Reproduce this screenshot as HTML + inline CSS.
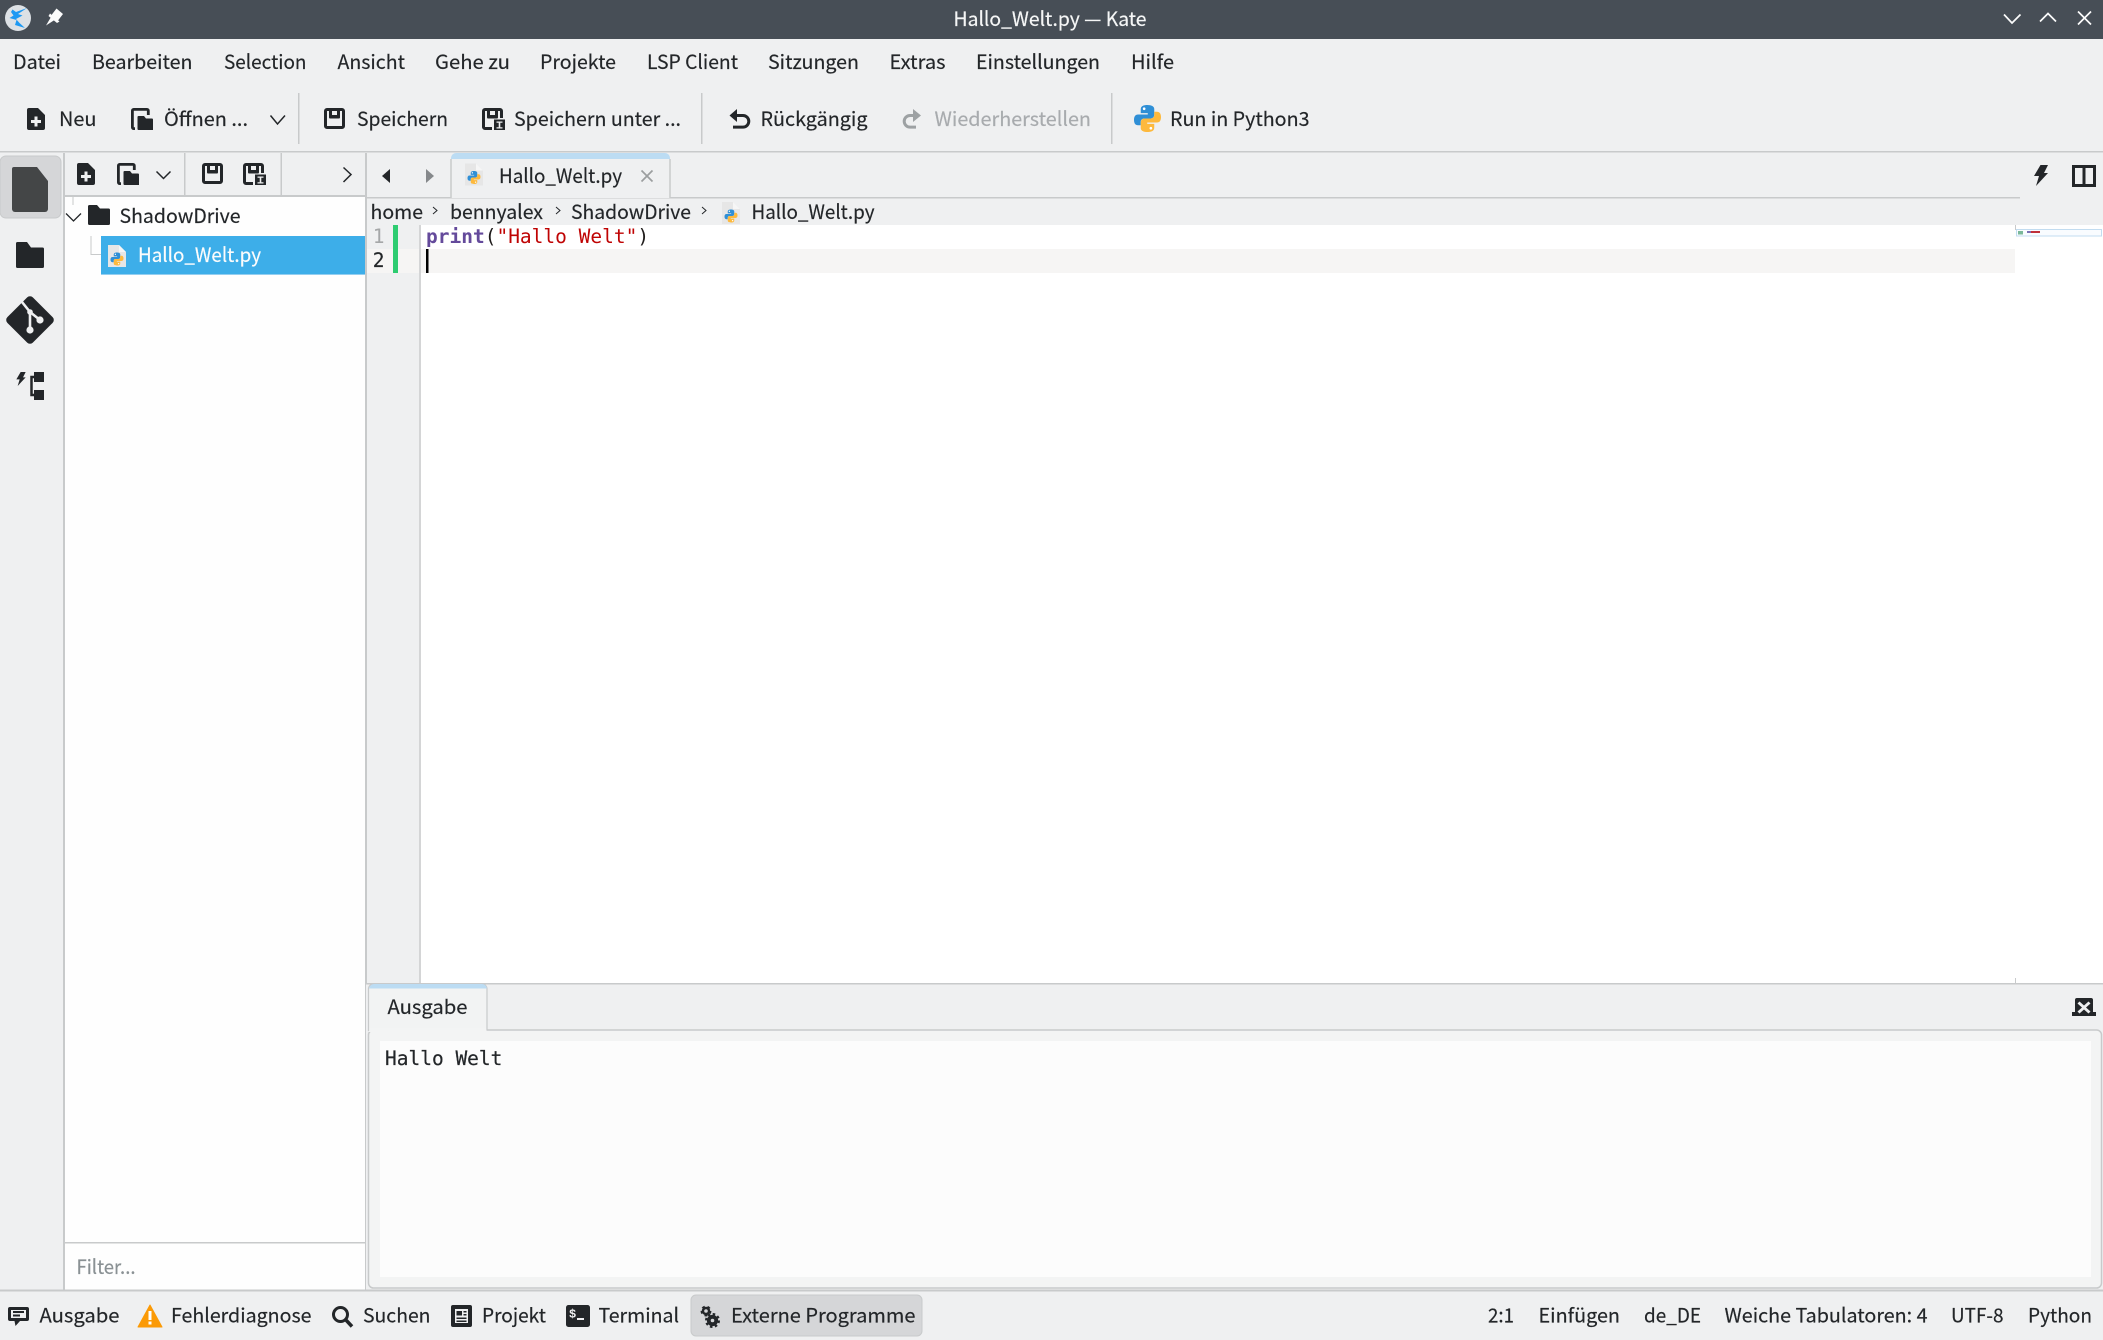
<!DOCTYPE html>
<html><head><meta charset="utf-8"><title>Hallo_Welt.py — Kate</title>
<style>
html,body{margin:0;padding:0;background:#eff0f1;width:2103px;height:1340px;overflow:hidden}
svg{display:block}
text{font-family:"Noto Sans CJK SC","Liberation Sans",sans-serif;font-size:19.6px;fill:#232629;stroke:#232629;stroke-width:.18px}
.m{font-family:"DejaVu Sans Mono","Liberation Mono",monospace;font-size:19.5px;stroke:none}
</style></head><body>
<svg xmlns="http://www.w3.org/2000/svg" width="2103" height="1340" viewBox="0 0 2103 1340">
<defs>
<symbol id="py" viewBox="2 2 20 20">
<path fill="#2f8fd6" d="M12 2C7.5 2 7 3.8 7 5.5V8h5.2v1H5C3 9 2 10.5 2 13s1 4 3 4h2v-2.5C7 12.8 8.3 12 10 12h4c1.7 0 3-1 3-3V5c0-2-2-3-5-3Z"/>
<path fill="#fdb93d" d="M12 22c4.5 0 5-1.8 5-3.500V16h-5.200v-1H19c2 0 3-1.500 3-4s-1-4-3-4h-2v2.500C17 11.200 15.700 12 14 12h-4c-1.700 0-3 1-3 3v4c0 2 2 3 5 3Z"/>
<circle cx="9.500" cy="4.800" r="1" fill="#fff"/><circle cx="14.500" cy="19.200" r="1" fill="#fff"/>
</symbol>
<symbol id="pyf" viewBox="0 0 18 22">
<path fill="#e6e6e6" d="M0 0H11L18 7V22H0Z"/><path fill="#f6f6f6" d="M11 0L18 7H11Z"/>
<use href="#py" x="2.500" y="7.500" width="13" height="13"/>
</symbol>
<symbol id="new" viewBox="0 0 18 22">
<path fill="#232629" fill-rule="evenodd" d="M2 0H11L18 7V20a2 2 0 0 1-2 2H2a2 2 0 0 1-2-2V2a2 2 0 0 1 2-2ZM7.500 8.500v3.500H4v3h3.500v3.500h3V15H14v-3h-3.500V8.500Z"/>
</symbol>
<symbol id="open" viewBox="0 0 22 22">
<path fill="none" stroke="#232629" stroke-width="2.800" d="M4 20.600H2.700a1.300 1.300 0 0 1-1.300-1.300V2.700A1.300 1.300 0 0 1 2.700 1.400H16a1.300 1.300 0 0 1 1.300 1.300V7"/>
<path fill="#232629" d="M6.500 9a1 1 0 0 1 1-1H13l2 2.500H21a1 1 0 0 1 1 1V22H7.500a1 1 0 0 1-1-1Z"/>
</symbol>
<symbol id="save" viewBox="0 0 21 21">
<path fill="none" stroke="#232629" stroke-width="3" d="M3 1.500H18a1.500 1.500 0 0 1 1.500 1.500V18a1.500 1.500 0 0 1-1.500 1.500H3A1.500 1.500 0 0 1 1.500 18V3A1.500 1.500 0 0 1 3 1.500Z"/>
<path fill="#232629" d="M5 1h3v6h5V1h3v8.500a1 1 0 0 1-1 1H6a1 1 0 0 1-1-1Z"/>
</symbol>
<symbol id="saveas" viewBox="0 0 23 22">
<path fill="none" stroke="#232629" stroke-width="3" d="M10 20.500H3A1.500 1.500 0 0 1 1.500 19V3A1.500 1.500 0 0 1 3 1.500H18A1.500 1.500 0 0 1 19.500 3V10"/>
<path fill="#232629" d="M5 1h3v6h5V1h3v8.500a1 1 0 0 1-1 1H6a1 1 0 0 1-1-1Z"/>
<path fill="#232629" fill-rule="evenodd" d="M12 11.500H23V22H12ZM14.500 13.500v1.300h2.200v4.400h-2.200v1.300h6v-1.300h-2.200v-4.400h2.200v-1.300Z"/>
</symbol>
<symbol id="bolt" viewBox="0 0 14 21">
<path fill="#232629" d="M6.500 0H14L10 8H14L2 21L5 11H0Z"/>
</symbol>
</defs>

<!-- base -->
<rect width="2103" height="1340" fill="#eff0f1"/>

<!-- title bar -->
<rect width="2103" height="39" fill="#474e56"/>
<circle cx="18" cy="18" r="13" fill="#dde1e5"/>
<path d="M27 8L16 12L12.500 9.500L11 12L13.500 15.500L9.500 18L16.500 20L15 25L25 28L19.500 23L16 19L22.500 15.500L18 14Z" fill="#1d99f3"/>
<path d="M56.500 8.500L63 14L58 20.500L51.500 15Z M50 13.500L59.500 21.500L57 23L48.500 16Z M51 17L54.500 20L46 25.500Z" fill="#fcfcfc"/>
<text x="953.500" y="26" textLength="193" lengthAdjust="spacingAndGlyphs" style="fill:#f5f6f6;stroke:#f5f6f6">Hallo_Welt.py — Kate</text>
<g fill="none" stroke="#fcfcfc" stroke-width="1.700">
<path d="M2004 14.500L2012 23L2020.500 14.500"/>
<path d="M2040 21.500L2048 13.500L2056 21.500"/>
<path d="M2078 11.500L2091 24.500M2091 11.500L2078 24.500"/>
</g>

<!-- menu -->
<g>
<text x="13" y="69" textLength="48" lengthAdjust="spacingAndGlyphs">Datei</text>
<text x="92" y="69" textLength="100.500" lengthAdjust="spacingAndGlyphs">Bearbeiten</text>
<text x="224" y="69" textLength="82.500" lengthAdjust="spacingAndGlyphs">Selection</text>
<text x="337.500" y="69" textLength="67.500" lengthAdjust="spacingAndGlyphs">Ansicht</text>
<text x="435" y="69" textLength="75" lengthAdjust="spacingAndGlyphs">Gehe zu</text>
<text x="540" y="69" textLength="76" lengthAdjust="spacingAndGlyphs">Projekte</text>
<text x="647" y="69" textLength="91" lengthAdjust="spacingAndGlyphs">LSP Client</text>
<text x="768" y="69" textLength="91" lengthAdjust="spacingAndGlyphs">Sitzungen</text>
<text x="889.500" y="69" textLength="56" lengthAdjust="spacingAndGlyphs">Extras</text>
<text x="976" y="69" textLength="124" lengthAdjust="spacingAndGlyphs">Einstellungen</text>
<text x="1131" y="69" textLength="43" lengthAdjust="spacingAndGlyphs">Hilfe</text>
</g>

<!-- toolbar -->
<use href="#new" x="27" y="108" width="18" height="22"/>
<text x="59" y="126" textLength="37.500" lengthAdjust="spacingAndGlyphs">Neu</text>
<use href="#open" x="131" y="108" width="22" height="22"/>
<text x="164" y="126" textLength="84" lengthAdjust="spacingAndGlyphs">Öffnen ...</text>
<path d="M270.500 115.500L277.500 124L285 115.500" fill="none" stroke="#232629" stroke-width="1.500"/>
<rect x="298" y="93" width="1.500" height="51" fill="#c8cacb"/>
<use href="#save" x="324" y="108" width="21" height="21"/>
<text x="357" y="126" textLength="91" lengthAdjust="spacingAndGlyphs">Speichern</text>
<use href="#saveas" x="482" y="108" width="23" height="22"/>
<text x="514" y="126" textLength="167" lengthAdjust="spacingAndGlyphs">Speichern unter ...</text>
<rect x="701" y="93" width="1.500" height="51" fill="#c8cacb"/>
<path d="M735 115.500H743a5.800 5.800 0 0 1 0 11.600H733" fill="none" stroke="#232629" stroke-width="3"/>
<path d="M737 109V122L729.500 115.500Z" fill="#232629"/>
<text x="760.500" y="126" textLength="107" lengthAdjust="spacingAndGlyphs">Rückgängig</text>
<path d="M915 115.500H910a5.800 5.800 0 0 0 0 11.600H916" fill="none" stroke="#9da1a3" stroke-width="3"/>
<path d="M913 109V122L921 115.500Z" fill="#9da1a3"/>
<text x="934.500" y="126" textLength="156.500" lengthAdjust="spacingAndGlyphs" style="fill:#a8abae;stroke:#a8abae">Wiederherstellen</text>
<rect x="1111" y="93" width="1.500" height="51" fill="#c8cacb"/>
<use href="#py" x="1133.500" y="105" width="28" height="27"/>
<text x="1170" y="126" textLength="139.500" lengthAdjust="spacingAndGlyphs">Run in Python3</text>
<rect x="0" y="151" width="2103" height="1.500" fill="#c8cacb"/>

<!-- left sidebar -->
<rect x="0" y="156" width="61" height="62" rx="6" fill="#d5d6d8" stroke="#c8cacb"/>
<path d="M14 167H37L48 181V209a3 3 0 0 1-3 3H15a3 3 0 0 1-3-3V169a2 2 0 0 1 2-2Z" fill="#444647"/>
<path d="M16 243.500a1.500 1.500 0 0 1 1.500-1.500H27L31 247.500H42.500a1.500 1.500 0 0 1 1.500 1.500V266.500a1.500 1.500 0 0 1-1.500 1.500H17.500a1.500 1.500 0 0 1-1.500-1.500Z" fill="#232629"/>
<rect x="12" y="302" width="36" height="36" rx="4" fill="#232629" transform="rotate(45 30 320)"/>
<path d="M22 302L30 312L40 320M30 312V330" fill="none" stroke="#eff0f1" stroke-width="2.600"/>
<circle cx="30" cy="330" r="3.600" fill="#eff0f1"/><circle cx="40" cy="320" r="3.600" fill="#eff0f1"/><circle cx="30" cy="312" r="2.800" fill="#eff0f1"/>
<use href="#bolt" x="16" y="372" width="10" height="14"/>
<rect x="34" y="372" width="10" height="10" fill="#232629"/>
<rect x="34" y="390" width="10" height="10" fill="#232629"/>
<path d="M34 377H31.500V395H34" fill="none" stroke="#232629" stroke-width="2.500"/>
<rect x="63" y="153" width="2" height="1137" fill="#c8cacb"/>

<!-- file panel -->
<rect x="65" y="197" width="300" height="1093" fill="#fefefe"/>
<rect x="65" y="195" width="301" height="2" fill="#c8cacb"/>
<rect x="184" y="153" width="1.500" height="42" fill="#c8cacb"/>
<rect x="280.500" y="153" width="1.500" height="42" fill="#c8cacb"/>
<rect x="365" y="153" width="2" height="1137" fill="#c8cacb"/>
<use href="#new" x="77" y="163" width="18" height="22"/>
<use href="#open" x="117" y="163" width="22" height="22"/>
<path d="M156.500 171.500L163.500 178.500L170.500 171.500" fill="none" stroke="#232629" stroke-width="1.500"/>
<use href="#save" x="202" y="163" width="21" height="21"/>
<use href="#saveas" x="243" y="163" width="23" height="22"/>
<path d="M343.500 167.500L351 174.500L343.500 182" fill="none" stroke="#232629" stroke-width="1.500"/>

<path d="M73 197V205" stroke="#c8cacb" fill="none"/>
<path d="M66 213.500L73.500 221L81 213.500" fill="none" stroke="#232629" stroke-width="1.300"/>
<path d="M88 206.500a1.500 1.500 0 0 1 1.500-1.500H97L100 208.500H108.500a1.500 1.500 0 0 1 1.500 1.500V223.500a1.500 1.500 0 0 1-1.500 1.500H89.500a1.500 1.500 0 0 1-1.500-1.500Z" fill="#232629"/>
<text x="119.500" y="223" textLength="121" lengthAdjust="spacingAndGlyphs">ShadowDrive</text>
<path d="M91 236V254.500H101" stroke="#c8cacb" fill="none"/>
<rect x="101" y="236" width="264" height="39" fill="#3daee9"/>
<rect x="101" y="274" width="264" height="1" fill="#93cef0"/>
<use href="#pyf" x="108" y="245" width="18" height="22"/>
<text x="138" y="262" textLength="123" lengthAdjust="spacingAndGlyphs" style="fill:#fcfcfc;stroke:#fcfcfc">Hallo_Welt.py</text>

<rect x="65" y="1242" width="300" height="1.500" fill="#c8cacb"/>
<text x="76.500" y="1274" textLength="59" lengthAdjust="spacingAndGlyphs" style="fill:#8a9194;stroke:#8a9194">Filter...</text>

<!-- tab bar -->
<path d="M382 176L390 169V183Z" fill="#232629"/>
<path d="M434 176L426 169V183Z" fill="#85888b"/>
<rect x="367" y="197" width="1653" height="1.500" fill="#c8cacb"/>
<path d="M451 198V158a5 5 0 0 1 5-5H665a5 5 0 0 1 5 5V198Z" fill="#eff0f1"/>
<path d="M451 159V158a5 5 0 0 1 5-5H665a5 5 0 0 1 5 5V159Z" fill="#bcdcf3"/>
<path d="M451 198V159M670 159V198" stroke="#c8cacb" stroke-width="1.500" fill="none"/>
<use href="#pyf" x="465" y="163" width="18" height="23"/>
<text x="499" y="183" textLength="123" lengthAdjust="spacingAndGlyphs">Hallo_Welt.py</text>
<path d="M641.500 170.500L652.500 181.500M652.500 170.500L641.500 181.500" stroke="#9b9e9f" stroke-width="1.700" fill="none"/>
<use href="#bolt" x="2034" y="165" width="14" height="21"/>
<path d="M2073.500 166.500H2094.500V185.500H2073.500ZM2084 166.500V185.500" fill="none" stroke="#232629" stroke-width="3"/>

<!-- breadcrumbs -->
<text x="370.500" y="219" textLength="52.500" lengthAdjust="spacingAndGlyphs">home</text>
<text x="450" y="219" textLength="93" lengthAdjust="spacingAndGlyphs">bennyalex</text>
<text x="571" y="219" textLength="120" lengthAdjust="spacingAndGlyphs">ShadowDrive</text>
<text x="751.500" y="219" textLength="123" lengthAdjust="spacingAndGlyphs">Hallo_Welt.py</text>
<g fill="none" stroke="#232629" stroke-width="1">
<path d="M433 207L437 210.500L433 214M556 207L560 210.500L556 214M702 207L706 210.500L702 214"/>
</g>
<use href="#pyf" x="722" y="202" width="18" height="22"/>

<!-- editor -->
<rect x="367" y="225" width="1736" height="758" fill="#ffffff"/>
<rect x="367" y="225" width="52" height="758" fill="#eff0f1"/>
<rect x="367" y="249" width="52" height="24" fill="#f6f5f4"/>
<rect x="393" y="225" width="5" height="48" fill="#2ecc71"/>
<rect x="419" y="225" width="2" height="758" fill="#d4d5d6"/>
<rect x="421" y="249" width="1594" height="24" fill="#f6f5f4"/>
<text class="m" x="372.800" y="243" style="fill:#a5a7a8">1</text>
<text class="m" x="372.800" y="267" style="fill:#232629;stroke:#232629;stroke-width:.2px">2</text>
<text class="m" x="426" y="243"><tspan font-weight="bold" style="fill:#644a9b">print</tspan><tspan style="fill:#1f1c1b">(</tspan><tspan style="fill:#bf0303">"Hallo Welt"</tspan><tspan style="fill:#1f1c1b">)</tspan></text>
<rect x="426" y="249" width="2.500" height="24" fill="#000"/>
<!-- minimap -->
<rect x="2015" y="225" width="1" height="5" fill="#c8cacb"/>
<rect x="2016.500" y="229.500" width="85" height="6.500" fill="#f9fcff" stroke="#c2dcf0"/>
<rect x="2018" y="231" width="5" height="3.500" fill="#7ab89a"/>
<rect x="2027" y="231" width="4" height="2" fill="#7a6fb5"/>
<rect x="2031" y="231" width="9" height="2" fill="#c0303a"/>
<rect x="2015" y="978" width="1" height="5" fill="#c8cacb"/>

<!-- bottom panel -->
<rect x="366" y="983" width="1737" height="307" fill="#eff0f1"/>
<rect x="366" y="983" width="1737" height="1.500" fill="#c8cacb"/>
<rect x="368.500" y="1030" width="1733" height="258" rx="5" fill="#f3f4f4" stroke="#c8cacb" stroke-width="1.500"/>
<path d="M368.500 1031V989a5 5 0 0 1 5-5H482a5 5 0 0 1 5 5V1030" fill="#f2f3f3"/>
<rect x="369" y="1028" width="117.500" height="4" fill="#f3f4f4"/>
<path d="M368.500 1031V989a5 5 0 0 1 5-5H482a5 5 0 0 1 5 5V1030" fill="none" stroke="#c8cacb" stroke-width="1.200"/>
<path d="M369 988.500V989a5 5 0 0 1 5-5H482a5 5 0 0 1 5 5V988.500Z" fill="#bcdcf3"/>
<text x="387.500" y="1014" textLength="80" lengthAdjust="spacingAndGlyphs">Ausgabe</text>
<path d="M2075 1000a2 2 0 0 1 2-2H2091a2 2 0 0 1 2 2V1012H2096V1016H2072V1012H2075ZM2079.500 1001.500L2084 1005.500L2088.500 1001.500L2090.500 1003.500L2086 1007.500L2090.500 1011.500L2088.500 1013.500L2084 1009.500L2079.500 1013.500L2077.500 1011.500L2082 1007.500L2077.500 1003.500Z" fill="#232629" fill-rule="evenodd"/>
<rect x="380" y="1041" width="1711" height="236" fill="#fcfcfc"/>
<text class="m" x="385" y="1065" style="fill:#232629;stroke:#232629;stroke-width:.2px">Hallo Welt</text>

<!-- status bar -->
<rect x="0" y="1289.500" width="2103" height="2" fill="#c8cacb"/>
<rect x="0" y="1291.500" width="2103" height="48.500" fill="#eff0f1"/>
<path d="M10 1307H27a2 2 0 0 1 2 2V1319a2 2 0 0 1-2 2H20L15.500 1326L14.500 1321H10a2 2 0 0 1-2-2V1309a2 2 0 0 1 2-2Z" fill="#232629"/>
<path d="M11 1310H26V1318H11Z" fill="#eff0f1"/>
<path d="M13 1312H24M13 1315.500H20" stroke="#232629" stroke-width="2"/>
<text x="39.500" y="1322.500" textLength="80" lengthAdjust="spacingAndGlyphs">Ausgabe</text>
<path d="M150 1305L162 1327H138Z" fill="#fb9a06" stroke="#fb9a06" stroke-linejoin="round"/>
<rect x="148.500" y="1311" width="3" height="9" fill="#fff"/><rect x="148.500" y="1321.500" width="3" height="3" fill="#fff"/>
<text x="171" y="1322.500" textLength="140.500" lengthAdjust="spacingAndGlyphs">Fehlerdiagnose</text>
<circle cx="340.500" cy="1314.500" r="7" fill="none" stroke="#232629" stroke-width="3"/>
<path d="M345.500 1319.500L352 1326.500" stroke="#232629" stroke-width="3.500"/>
<text x="363" y="1322.500" textLength="67.500" lengthAdjust="spacingAndGlyphs">Suchen</text>
<path d="M453 1305H470a2 2 0 0 1 2 2V1325a2 2 0 0 1-2 2H453a2 2 0 0 1-2-2V1307a2 2 0 0 1 2-2Z" fill="#232629"/>
<path d="M455 1309H468V1323H455Z" fill="#eff0f1"/>
<path d="M456.500 1311H462V1315.500H456.500ZM456.500 1317.500H466.500V1319H456.500ZM456.500 1320.500H466.500V1322H456.500ZM463.500 1311H466.500V1312.500H463.500ZM463.500 1314H466.500V1315.500H463.500Z" fill="#232629"/>
<text x="482" y="1322.500" textLength="64" lengthAdjust="spacingAndGlyphs">Projekt</text>
<rect x="566" y="1305" width="24" height="22" rx="2.500" fill="#232629"/>
<text x="569" y="1317.500" style="fill:#eff0f1;stroke:none;font-size:12px;font-weight:bold;font-family:'Liberation Mono',monospace">$</text>
<rect x="577" y="1318" width="7" height="2" fill="#eff0f1"/>
<text x="598.500" y="1322.500" textLength="80.500" lengthAdjust="spacingAndGlyphs">Terminal</text>
<rect x="691" y="1295" width="231" height="41" rx="5" fill="#d5d6d8" stroke="#c8cacb"/>
<g fill="none" stroke="#232629">
<circle cx="706" cy="1311" r="3" stroke-width="2.400"/>
<circle cx="706" cy="1311" r="4.600" stroke-width="1.700" stroke-dasharray="2.890 2.890"/>
<circle cx="712.500" cy="1320.500" r="3.700" stroke-width="3.800"/>
<circle cx="712.500" cy="1320.500" r="6.300" stroke-width="2.400" stroke-dasharray="2.474 2.474"/>
</g>
<text x="731" y="1322.500" textLength="184.500" lengthAdjust="spacingAndGlyphs">Externe Programme</text>
<text x="1488" y="1322.500" textLength="26" lengthAdjust="spacingAndGlyphs">2:1</text>
<text x="1538.500" y="1322.500" textLength="81.500" lengthAdjust="spacingAndGlyphs">Einfügen</text>
<text x="1644" y="1322.500" textLength="57" lengthAdjust="spacingAndGlyphs">de_DE</text>
<text x="1724.500" y="1322.500" textLength="203" lengthAdjust="spacingAndGlyphs">Weiche Tabulatoren: 4</text>
<text x="1951" y="1322.500" textLength="52.500" lengthAdjust="spacingAndGlyphs">UTF-8</text>
<text x="2028" y="1322.500" textLength="64" lengthAdjust="spacingAndGlyphs">Python</text>
</svg>
</body></html>
